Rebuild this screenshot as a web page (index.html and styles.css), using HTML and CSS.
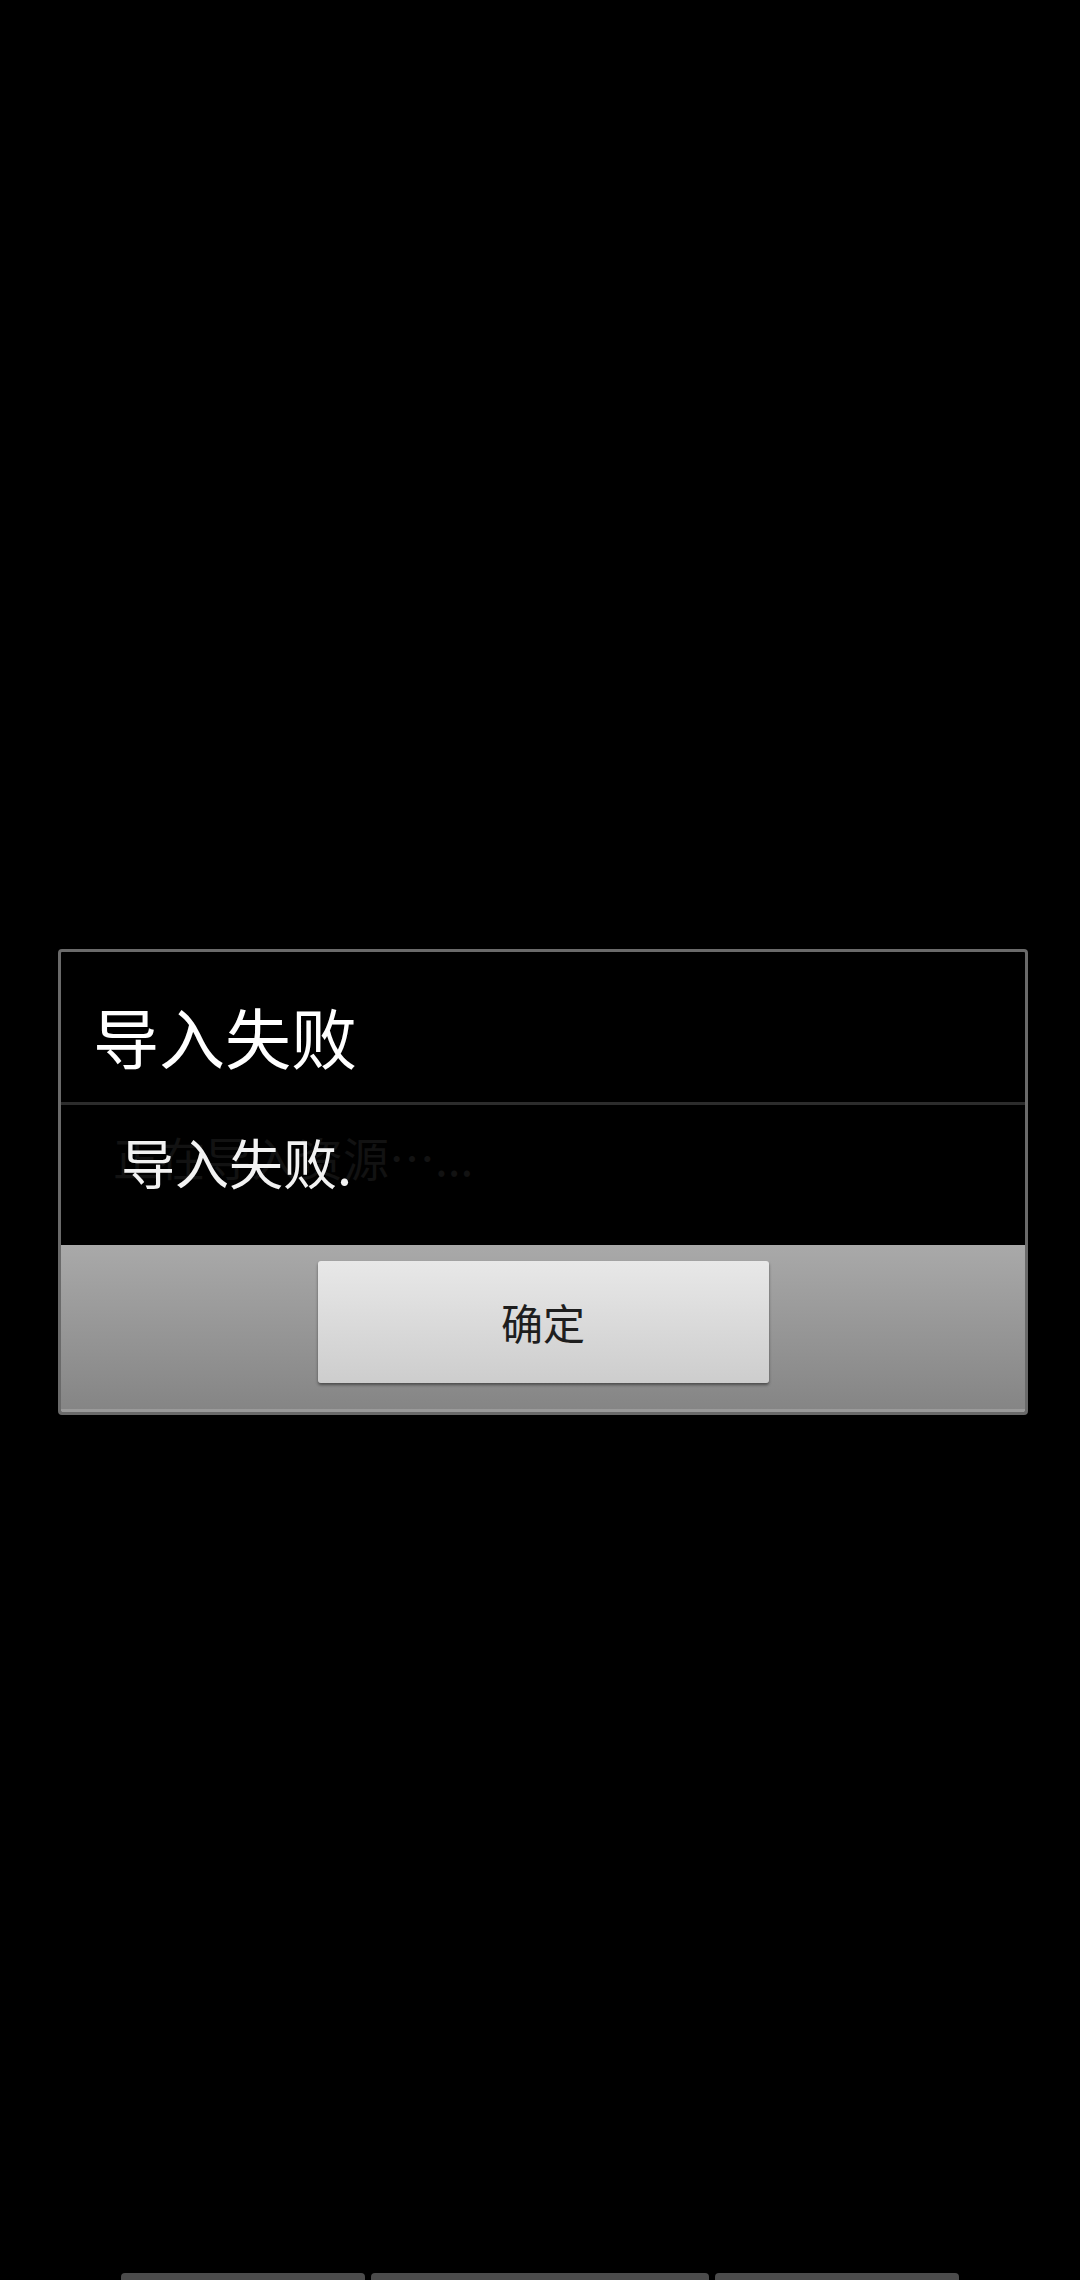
FILE: index.html
```html
<!DOCTYPE html>
<html lang="zh-CN">
<head>
<meta charset="utf-8">
<title>导入失败</title>
<link rel="stylesheet" href="styles.css">
</head>
<body>
<div class="screen">
  <div class="dialog">
    <div class="dialog-title">导入失败</div>
    <div class="dialog-divider"></div>
    <div class="dialog-message">
      <span class="ghost">正在导入资源…...</span>
      <span class="message">导入失败.</span>
    </div>
    <div class="dialog-buttons">
      <div class="btn">确定</div>
    </div>
  </div>
  <div class="navbars">
    <div class="navbar nb1"></div>
    <div class="navbar nb2"></div>
    <div class="navbar nb3"></div>
  </div>
</div>
</body>
</html>
```

FILE: styles.css
```css
html, body {
  margin: 0;
  padding: 0;
  background: #000;
}
.screen {
  width: 1080px;
  height: 2280px;
  overflow: hidden;
  display: flex;
  flex-direction: column;
  font-family: "Noto Sans CJK SC", "Noto Sans", sans-serif;
}
.dialog {
  margin: 949px 0 0 58px;
  width: 970px;
  box-sizing: border-box;
  border: 3px solid #6a6a6a;
  border-radius: 4px;
  background: #000;
  display: flex;
  flex-direction: column;
  overflow: hidden;
}
.dialog-title {
  height: 150px;
  box-sizing: border-box;
  padding: 16px 0 0 32px;
  display: flex;
  align-items: center;
  color: #fff;
  font-size: 66px;
  line-height: 1;
}
.dialog-divider {
  height: 3px;
  background: #2c2c2c;
}
.dialog-message {
  position: relative;
  height: 140px;
  box-sizing: border-box;
  padding: 0 0 26px 60px;
  display: flex;
  align-items: center;
}
.ghost {
  position: absolute;
  left: 52px;
  top: 28px;
  color: #121212;
  font-size: 46px;
  line-height: 1;
  white-space: nowrap;
}
.message {
  position: relative;
  color: #f2f2f2;
  font-size: 54px;
  line-height: 1;
}
.dialog-buttons {
  height: 167px;
  box-sizing: border-box;
  padding-top: 16px;
  display: flex;
  justify-content: center;
  align-items: flex-start;
  background: linear-gradient(#a9a9a9, #858585);
  border-bottom: 3px solid #9a9a9a;
}
.btn {
  width: 451px;
  height: 122px;
  box-sizing: border-box;
  border-radius: 3px;
  background: linear-gradient(#e8e8e8, #cdcdcd);
  box-shadow: 0 2px 3px rgba(0,0,0,0.45);
  display: flex;
  align-items: center;
  justify-content: center;
  color: #1e1e1e;
  font-size: 42px;
  line-height: 1;
}
.navbars {
  margin-top: auto;
  padding-left: 121px;
  display: flex;
  gap: 6px;
}
.navbar {
  height: 7px;
  background: #4c4c4c;
  border-radius: 4px 4px 0 0;
}
.nb1 { width: 244px; }
.nb2 { width: 338px; }
.nb3 { width: 244px; }
```
